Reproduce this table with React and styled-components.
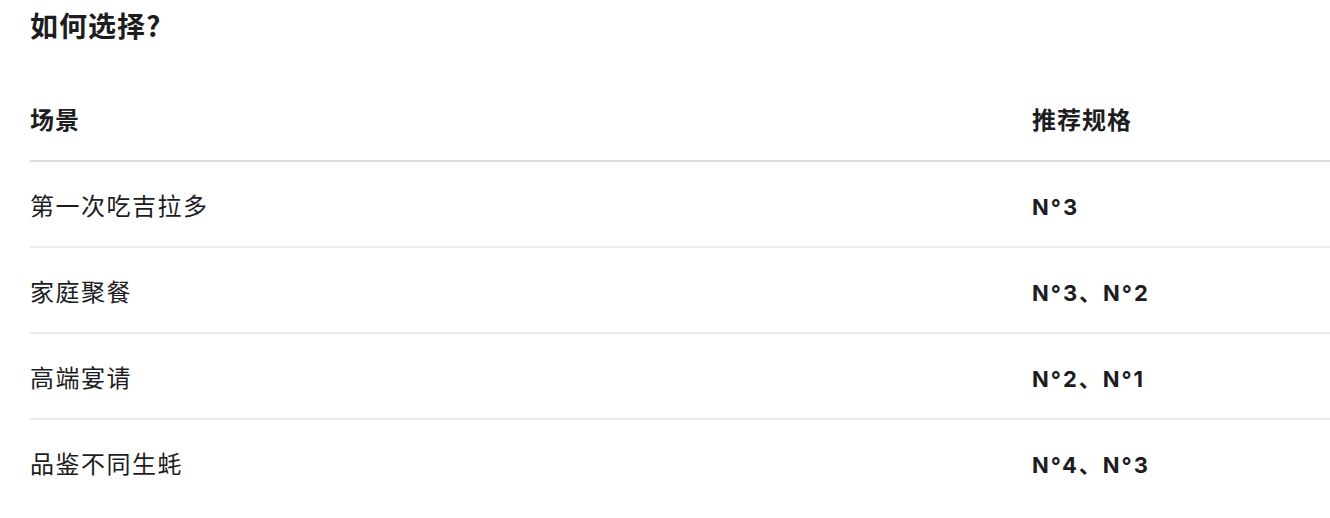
import styled, { createGlobalStyle } from "styled-components";

const GlobalStyle = createGlobalStyle`
  body {
    margin: 0;
    background: #fff;
    font-family: "Liberation Sans", "Noto Sans CJK SC", sans-serif;
    color: #1d1d1f;
  }
`;

const rows = [
  { scene: "第一次吃吉拉多", size: "N°3" },
  { scene: "家庭聚餐", size: "N°3、N°2" },
  { scene: "高端宴请", size: "N°2、N°1" },
  { scene: "品鉴不同生蚝", size: "N°4、N°3" },
];

const App = () => {
  return (
    <Section>
      <GlobalStyle />
      <Heading>如何选择?</Heading>
      <Table>
        <HeadRow>
          <HeadCell>场景</HeadCell>
          <HeadCell>推荐规格</HeadCell>
        </HeadRow>
        {rows.map((r, i) => (
          <Row key={r.scene} $last={i === rows.length - 1}>
            <Cell>{r.scene}</Cell>
            <SizeCell>{r.size}</SizeCell>
          </Row>
        ))}
      </Table>
    </Section>
  );
};
export default App;

const Section = styled.div`
  padding: 8px 0 0 30px;
`;
const Heading = styled.h2`
  margin: 0;
  font-family: "Noto Sans CJK SC", sans-serif;
  font-size: 28px;
  line-height: 34px;
  font-weight: 700;
  letter-spacing: 1px;
`;
const Table = styled.div`
  margin-top: 41px;
`;
const HeadRow = styled.div`
  display: grid;
  grid-template-columns: 1002px 1fr;
  padding: 24px 0 25px;
  border-bottom: 2px solid #dcdcdc;
`;
const HeadCell = styled.div`
  font-size: 24px;
  line-height: 28px;
  font-weight: 700;
  letter-spacing: 1px;
`;
const Row = styled.div`
  display: grid;
  grid-template-columns: 1002px 1fr;
  padding: 31px 0 25px;
  border-bottom: ${(p) => (p.$last ? "none" : "2px solid #ebebeb")};
`;
const Cell = styled.div`
  font-size: 24px;
  line-height: 28px;
  font-weight: 400;
  letter-spacing: 1.5px;
`;
const SizeCell = styled.div`
  font-family: Inter, "Noto Sans CJK SC", sans-serif;
  font-size: 22px;
  line-height: 28px;
  font-weight: 700;
  letter-spacing: 2px;
`;
